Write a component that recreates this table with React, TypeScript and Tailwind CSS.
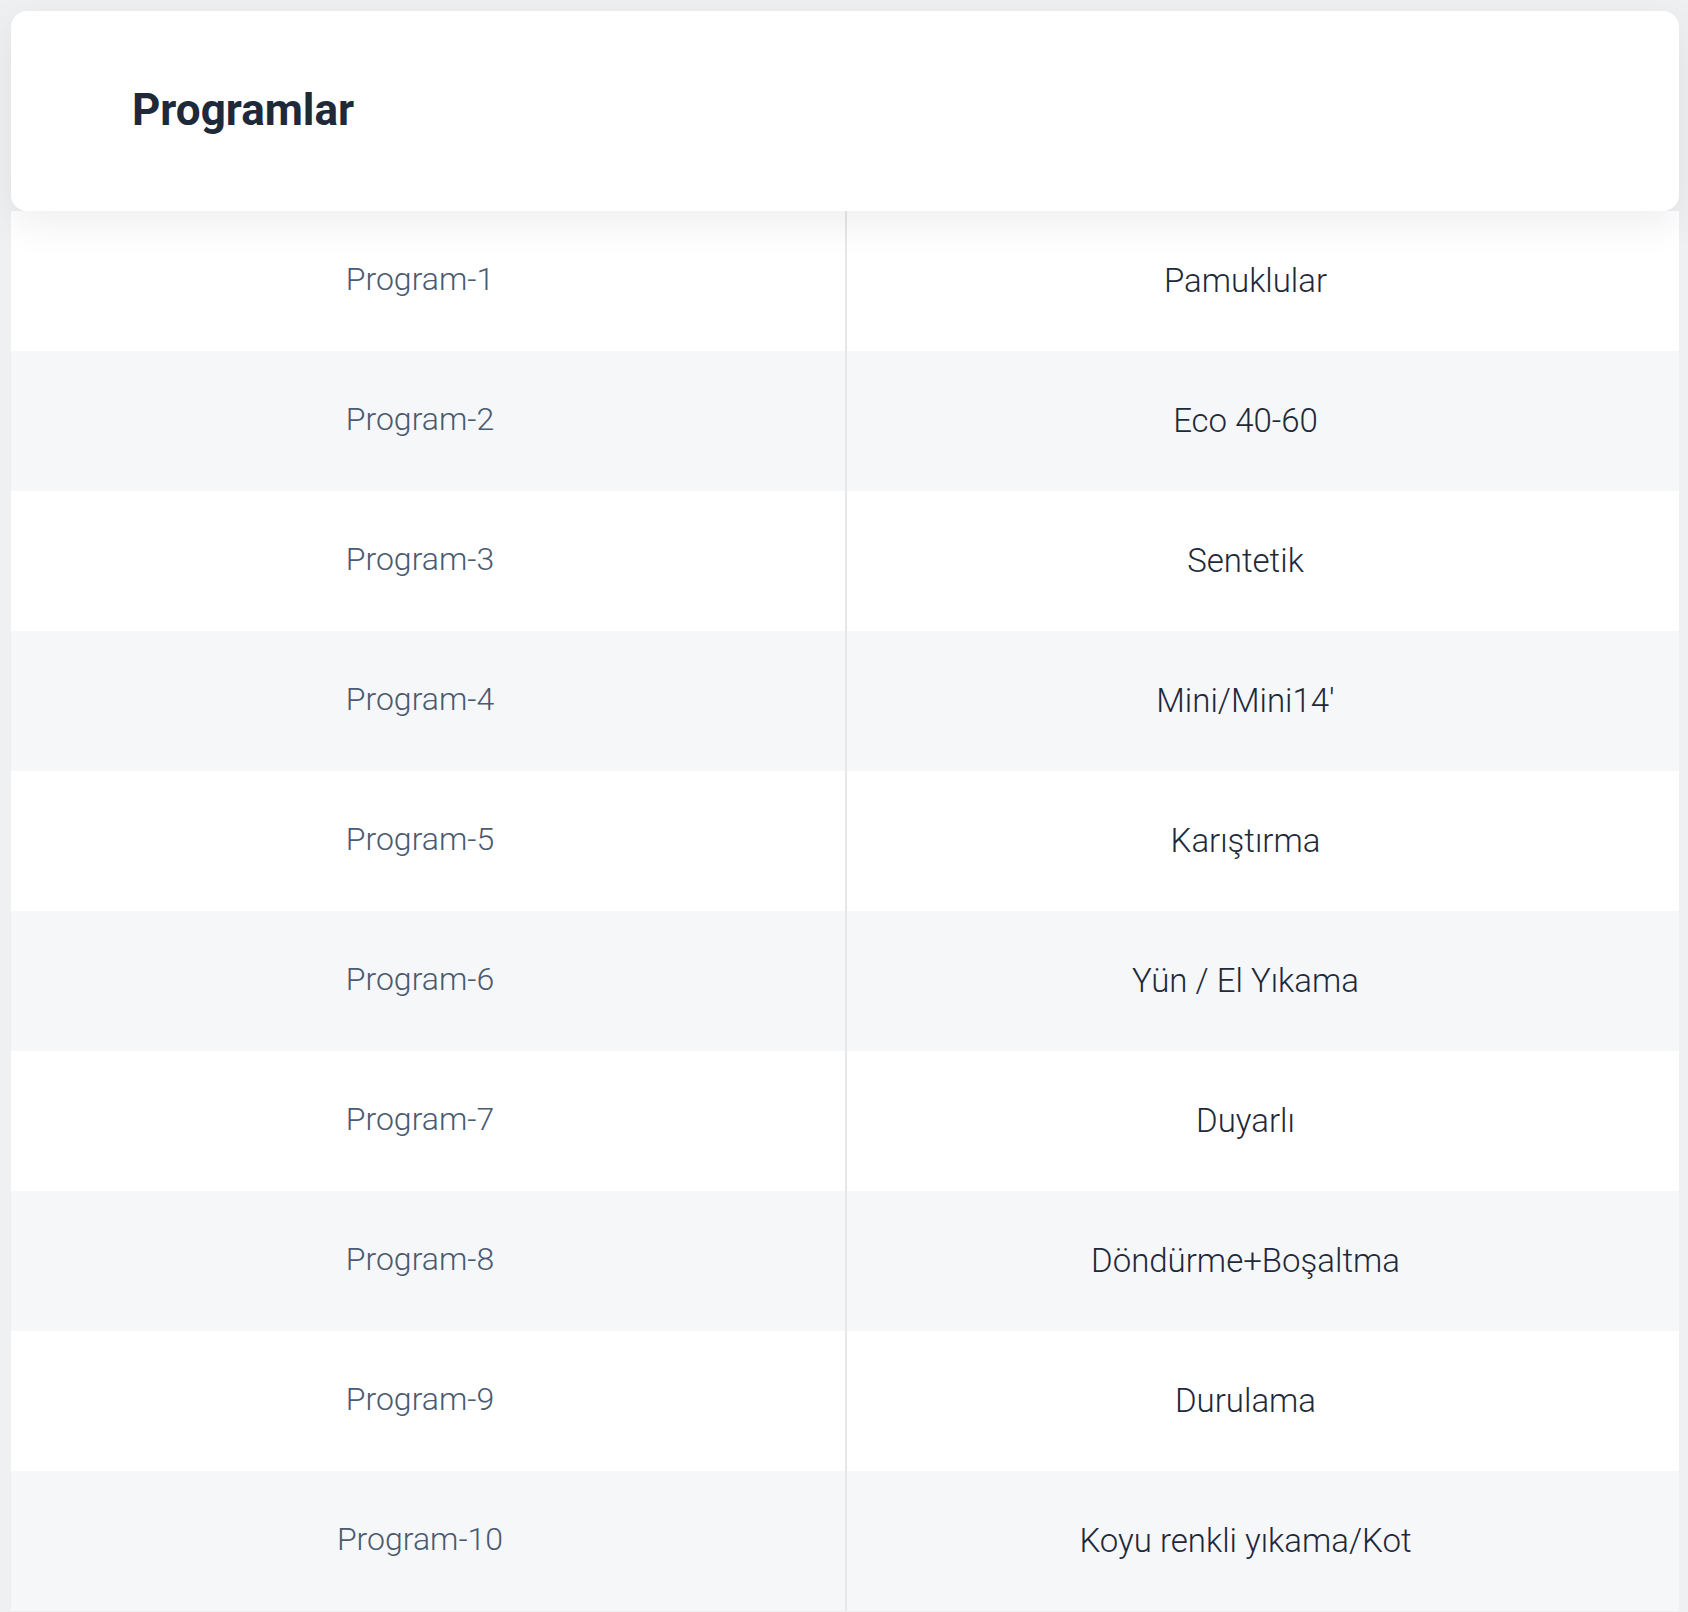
import React from "react";

const programlar = [
  { kod: "Program-1", ad: "Pamuklular" },
  { kod: "Program-2", ad: "Eco 40-60" },
  { kod: "Program-3", ad: "Sentetik" },
  { kod: "Program-4", ad: "Mini/Mini14'" },
  { kod: "Program-5", ad: "Karıştırma" },
  { kod: "Program-6", ad: "Yün / El Yıkama" },
  { kod: "Program-7", ad: "Duyarlı" },
  { kod: "Program-8", ad: "Döndürme+Boşaltma" },
  { kod: "Program-9", ad: "Durulama" },
  { kod: "Program-10", ad: "Koyu renkli yıkama/Kot" },
];

const App = () => {
  return (
    <div className="min-h-screen bg-[#eef0f2] pt-[11px] pl-[11px] pr-[9px] font-['Roboto',sans-serif]">
      <div className="flex flex-col">
        {/* Başlık kartı */}
        <div className="relative z-10 flex h-[200px] items-center rounded-2xl bg-white pl-[121px] pb-[2px] shadow-[0_12px_40px_rgba(0,0,0,0.07)]">
          <h1 className="text-[44px] font-bold text-[#1e2939]">Programlar</h1>
        </div>

        {/* Program listesi */}
        <div className="flex flex-col">
          {programlar.map((p, i) => (
            <div
              key={p.kod}
              className={`grid h-[140px] grid-cols-2 ${i % 2 === 1 ? "bg-[#f6f7f9]" : "bg-white"}`}
            >
              <div className="flex items-center justify-center pr-[16px] pb-[4px] text-[32px] font-light text-[#4a5a6f]">
                {p.kod}
              </div>
              <div className="flex items-center justify-center border-l-2 border-[#e6e7e9] pr-[35px] pb-[1px] text-[33px] font-light text-[#1e2939]">
                {p.ad}
              </div>
            </div>
          ))}
        </div>
      </div>
    </div>
  );
};

export default App;
